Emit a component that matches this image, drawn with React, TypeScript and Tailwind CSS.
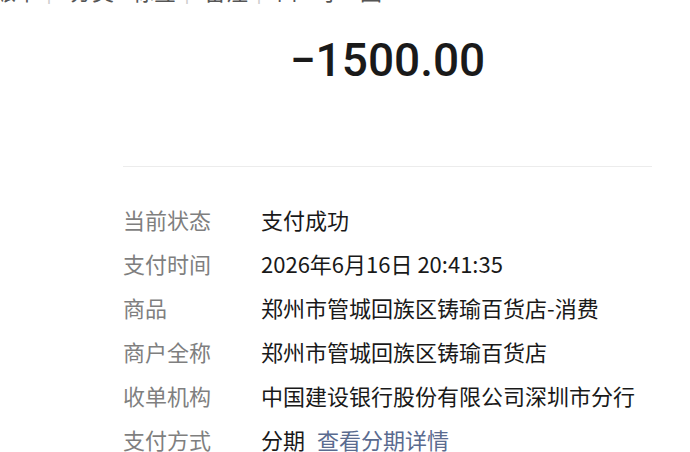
import React from "react";

const rows: { label: string; value: React.ReactNode }[] = [
  { label: "当前状态", value: "支付成功" },
  { label: "支付时间", value: "2026年6月16日 20:41:35" },
  { label: "商品", value: "郑州市管城回族区铸瑜百货店-消费" },
  { label: "商户全称", value: "郑州市管城回族区铸瑜百货店" },
  { label: "收单机构", value: "中国建设银行股份有限公司深圳市分行" },
  {
    label: "支付方式",
    value: (
      <>
        分期<span className="ml-[12px] text-[#5a6b8f]">查看分期详情</span>
      </>
    ),
  },
];

export default function App() {
  return (
    <div
      className="w-[690px] h-[452px] overflow-hidden bg-white"
      style={{ fontFamily: '"Noto Sans CJK SC", "Noto Sans", sans-serif' }}
    >
      <div className="h-[4px] overflow-hidden">
        <div className="-mt-[22px] flex items-center text-[22px] leading-[24px] text-[#555] whitespace-nowrap">
          <span className="ml-[-6px]">账单</span>
          <span className="ml-[8px] text-[#ccc]">|</span>
          <span className="ml-[18px]">分类</span>
          <span className="ml-[18px]">标签</span>
          <span className="ml-[8px] text-[#ccc]">|</span>
          <span className="ml-[14px]">备注</span>
          <span className="ml-[8px] text-[#ccc]">|</span>
          <span className="ml-[14px]">口</span>
          <span className="ml-[22px]">小</span>
          <span className="ml-[18px]">图</span>
        </div>
      </div>
      <div className="pl-[123px] pr-[38px]">
        <div
          className="h-[112px] flex items-center justify-center text-[46px] font-medium text-[#1a1a1a]"
          style={{ fontFamily: 'Roboto, "Noto Sans", sans-serif' }}
        >
          −1500.00
        </div>
        <div className="mt-[50px] h-px bg-[#ececec]" />
        <div className="mt-[30px] flex flex-col">
          {rows.map((r) => (
            <div key={r.label} className="flex h-[44px] items-center text-[22px] whitespace-nowrap">
              <div className="w-[138px] text-[#7f7f7f]">{r.label}</div>
              <div className="text-[#191919]">{r.value}</div>
            </div>
          ))}
        </div>
      </div>
    </div>
  );
}
